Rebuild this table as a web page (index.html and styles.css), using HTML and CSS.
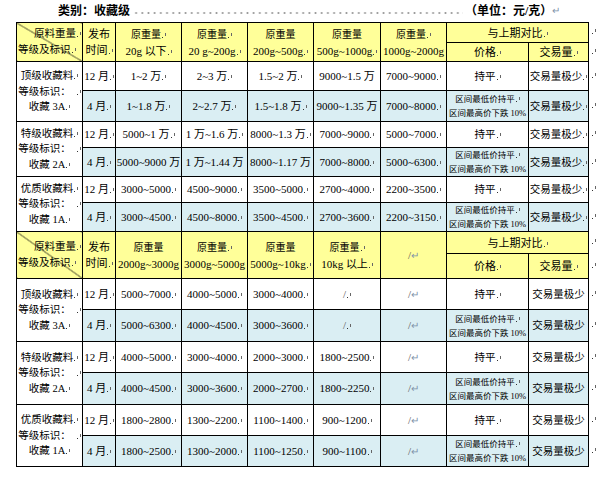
FILE: index.html
```html
<!DOCTYPE html>
<html lang="zh-CN">
<head>
<meta charset="utf-8">
<title>收藏级</title>
<link rel="stylesheet" href="styles.css">
</head>
<body>
<div class="title"><span class="t1">类别：收藏级</span><span class="dots"></span><span class="t2">（单位：元/克）</span><span class="ret">↵</span></div>
<table class="grid">
<colgroup>
<col class="c66"><col class="c33"><col class="c66"><col class="c66"><col class="c66"><col class="c67"><col class="c66"><col class="c82"><col class="c60"><col class="c12">
</colgroup>
<tbody>
<tr class="h20">
<td rowspan="2" class="hd diag"><div class="dl1">原料重量<i class="m"></i></div><div class="dl2">等级及标识<i class="m"></i></div></td>
<td rowspan="2" class="hd">发布<br>时间<i class="m"></i></td>
<td rowspan="2" class="hd"><span class="s">原重量</span><i class="m"></i><br>20g 以下<i class="m"></i></td>
<td rowspan="2" class="hd"><span class="s">原重量</span><i class="m"></i><br>20 g~200g<i class="m"></i></td>
<td rowspan="2" class="hd"><span class="s">原重量</span><br>200g~500g<i class="m"></i></td>
<td rowspan="2" class="hd"><span class="s">原重量</span><br>500g~1000g<i class="m"></i></td>
<td rowspan="2" class="hd"><span class="s">原重量</span><i class="m"></i><br>1000g~2000g</td>
<td colspan="2" class="hd">与上期对比<i class="m"></i></td>
<td class="rm"><i class="m"></i></td>
</tr>
<tr class="h18">
<td class="hd s">价格<i class="m"></i></td>
<td class="hd s">交易量<i class="m"></i></td>
<td class="rm"><i class="m"></i></td>
</tr>

<tr class="h29">
<td rowspan="2" class="g">顶级收藏料<i class="m"></i><br>等级标识：<i class="m sp"></i><br>收藏 3A<i class="m"></i></td>
<td>12 月<i class="m"></i></td>
<td>1~2 万<i class="m"></i></td>
<td>2~3 万<i class="m"></i></td>
<td>1.5~2 万<i class="m"></i></td>
<td>9000~1.5 万</td>
<td>7000~9000<i class="m"></i></td>
<td class="k">持平<i class="m"></i></td>
<td class="k">交易量极少<i class="m"></i></td>
<td class="rm"><i class="m"></i></td>
</tr>
<tr class="h31 b">
<td>4 月<i class="m"></i></td>
<td>1~1.8 万<i class="m"></i></td>
<td>2~2.7 万<i class="m"></i></td>
<td>1.5~1.8 万<i class="m"></i></td>
<td>9000~1.35 万</td>
<td>7000~8000<i class="m"></i></td>
<td class="sm">区间最低价持平<i class="m"></i><br>区间最高价下跌 10%</td>
<td class="k">交易量极少<i class="m"></i></td>
<td class="rm"><i class="m"></i></td>
</tr>

<tr class="h26">
<td rowspan="2" class="g">特级收藏料<i class="m"></i><br>等级标识：<i class="m sp"></i><br>收藏 2A<i class="m"></i></td>
<td>12 月<i class="m"></i></td>
<td>5000~1 万<i class="m"></i></td>
<td>1 万~1.6 万<i class="m"></i></td>
<td>8000~1.3 万<i class="m"></i></td>
<td>7000~9000<i class="m"></i></td>
<td>5000~7000<i class="m"></i></td>
<td class="k">持平<i class="m"></i></td>
<td class="k">交易量极少<i class="m"></i></td>
<td class="rm"><i class="m"></i></td>
</tr>
<tr class="h28 b">
<td>4 月<i class="m"></i></td>
<td>5000~9000 万</td>
<td>1 万~1.44 万</td>
<td>8000~1.17 万</td>
<td>7000~8000<i class="m"></i></td>
<td>5000~6300<i class="m"></i></td>
<td class="sm">区间最低价持平<i class="m"></i><br>区间最高价下跌 10%</td>
<td class="k">交易量极少<i class="m"></i></td>
<td class="rm"><i class="m"></i></td>
</tr>

<tr class="h26">
<td rowspan="2" class="g">优质收藏料<i class="m"></i><br>等级标识：<i class="m sp"></i><br>收藏 1A<i class="m"></i></td>
<td>12 月<i class="m"></i></td>
<td>3000~5000<i class="m"></i></td>
<td>4500~9000<i class="m"></i></td>
<td>3500~5000<i class="m"></i></td>
<td>2700~4000<i class="m"></i></td>
<td>2200~3500<i class="m"></i></td>
<td class="k">持平<i class="m"></i></td>
<td class="k">交易量极少<i class="m"></i></td>
<td class="rm"><i class="m"></i></td>
</tr>
<tr class="h28 b">
<td>4 月<i class="m"></i></td>
<td>3000~4500<i class="m"></i></td>
<td>4500~8000<i class="m"></i></td>
<td>3500~4500<i class="m"></i></td>
<td>2700~3600<i class="m"></i></td>
<td>2200~3150<i class="m"></i></td>
<td class="sm">区间最低价持平<i class="m"></i><br>区间最高价下跌 10%</td>
<td class="k">交易量极少<i class="m"></i></td>
<td class="rm"><i class="m"></i></td>
</tr>

<tr class="h22">
<td rowspan="2" class="hd diag"><div class="dl1">原料重量<i class="m"></i></div><div class="dl2">等级及标识<i class="m"></i></div></td>
<td rowspan="2" class="hd">发布<br>时间<i class="m"></i></td>
<td rowspan="2" class="hd"><span class="s">原重量</span><br>2000g~3000g</td>
<td rowspan="2" class="hd"><span class="s">原重量</span><i class="m"></i><br>3000g~5000g</td>
<td rowspan="2" class="hd"><span class="s">原重量</span><br>5000g~10kg<i class="m"></i></td>
<td rowspan="2" class="hd"><span class="s">原重量</span><i class="m"></i><br>10kg 以上<i class="m"></i></td>
<td rowspan="2" class="hd gr">/<span class="ret">↵</span></td>
<td colspan="2" class="hd">与上期对比<i class="m"></i></td>
<td class="rm"><i class="m"></i></td>
</tr>
<tr class="h25">
<td class="hd s">价格<i class="m"></i></td>
<td class="hd s">交易量<i class="m"></i></td>
<td class="rm"><i class="m"></i></td>
</tr>

<tr class="h31">
<td rowspan="2" class="g">顶级收藏料<i class="m"></i><br>等级标识：<i class="m sp"></i><br>收藏 3A<i class="m"></i></td>
<td>12 月<i class="m"></i></td>
<td>5000~7000<i class="m"></i></td>
<td>4000~5000<i class="m"></i></td>
<td>3000~4000<i class="m"></i></td>
<td class="gr">/<i class="m"></i></td>
<td class="gr">/<span class="ret">↵</span></td>
<td class="k">持平<i class="m"></i></td>
<td class="k">交易量极少</td>
<td class="rm"><i class="m"></i></td>
</tr>
<tr class="h32 b">
<td>4 月<i class="m"></i></td>
<td>5000~6300<i class="m"></i></td>
<td>4000~4500<i class="m"></i></td>
<td>3000~3600<i class="m"></i></td>
<td class="gr">/<i class="m"></i></td>
<td class="gr">/<span class="ret">↵</span></td>
<td class="sm">区间最低价持平<i class="m"></i><br>区间最高价下跌 10%</td>
<td class="k">交易量极少</td>
<td class="rm"><i class="m"></i></td>
</tr>

<tr class="h31">
<td rowspan="2" class="g">特级收藏料<i class="m"></i><br>等级标识：<i class="m sp"></i><br>收藏 2A<i class="m"></i></td>
<td>12 月<i class="m"></i></td>
<td>4000~5000<i class="m"></i></td>
<td>3000~4000<i class="m"></i></td>
<td>2000~3000<i class="m"></i></td>
<td>1800~2500<i class="m"></i></td>
<td class="gr">/<span class="ret">↵</span></td>
<td class="k">持平<i class="m"></i></td>
<td class="k">交易量极少</td>
<td class="rm"><i class="m"></i></td>
</tr>
<tr class="h32 b">
<td>4 月<i class="m"></i></td>
<td>4000~4500<i class="m"></i></td>
<td>3000~3600<i class="m"></i></td>
<td>2000~2700<i class="m"></i></td>
<td>1800~2250<i class="m"></i></td>
<td class="gr">/<span class="ret">↵</span></td>
<td class="sm">区间最低价持平<i class="m"></i><br>区间最高价下跌 10%</td>
<td class="k">交易量极少</td>
<td class="rm"><i class="m"></i></td>
</tr>

<tr class="h31">
<td rowspan="2" class="g">优质收藏料<i class="m"></i><br>等级标识：<i class="m sp"></i><br>收藏 1A<i class="m"></i></td>
<td>12 月<i class="m"></i></td>
<td>1800~2800<i class="m"></i></td>
<td>1300~2200<i class="m"></i></td>
<td>1100~1400<i class="m"></i></td>
<td>900~1200<i class="m"></i></td>
<td class="gr">/<span class="ret">↵</span></td>
<td class="k">持平<i class="m"></i></td>
<td class="k">交易量极少</td>
<td class="rm"><i class="m"></i></td>
</tr>
<tr class="h31 b">
<td>4 月<i class="m"></i></td>
<td>1800~2500<i class="m"></i></td>
<td>1300~2000<i class="m"></i></td>
<td>1100~1250<i class="m"></i></td>
<td>900~1100<i class="m"></i></td>
<td class="gr">/<span class="ret">↵</span></td>
<td class="sm">区间最低价持平<i class="m"></i><br>区间最高价下跌 10%</td>
<td class="k">交易量极少</td>
<td class="rm"><i class="m"></i></td>
</tr>
</tbody>
</table>
</body>
</html>
```

FILE: styles.css
```css
body {
  margin: 0;
  background: #ffffff;
  color: #000000;
  font-family: "Liberation Serif", "Noto Sans CJK SC", serif;
}

.title {
  display: flex;
  align-items: center;
  height: 22px;
  padding-left: 58px;
  font-family: "Liberation Serif", "Noto Sans CJK SC", serif;
  font-weight: bold;
  font-size: 12px;
  line-height: 22px;
}

.dots {
  width: 330px;
  height: 2px;
  margin: 3px 2px 0 3px;
  background: radial-gradient(circle, #9a9a9a 0.9px, transparent 1.1px) 0 0 / 6.2px 2px repeat-x;
}

.ret {
  color: #8094aa;
  font-weight: normal;
  font-size: 10px;
}

.grid {
  border-collapse: collapse;
  table-layout: fixed;
  margin-left: 16px;
  width: 584px;
}

.c66 { width: 66px; }
.c33 { width: 33px; }
.c67 { width: 67px; }
.c82 { width: 82px; }
.c60 { width: 60px; }
.c12 { width: 12px; }

.grid td {
  border: 1px solid #000000;
  padding: 0;
  text-align: center;
  vertical-align: middle;
  font-size: 11px;
  line-height: 15px;
  white-space: nowrap;
  overflow: visible;
}

.h20 { height: 20px; }
.h18 { height: 18px; }
.h22 { height: 22px; }
.h25 { height: 25px; }
.h26 { height: 26px; }
.h28 { height: 28px; }
.h29 { height: 29px; }
.h31 { height: 31px; }
.h32 { height: 32px; }

.grid td.hd {
  background: #ffff99;
  line-height: 16px;
}

.s {
  font-size: 10px;
}

.grid td.k {
  font-size: 10.5px;
}

.b td {
  background: #daeef3;
}

.grid td.rm {
  border: none;
  background: none;
  text-align: left;
  vertical-align: middle;
  padding-left: 2px;
  padding-bottom: 4px;
}

.grid td.g {
  background: #ffffff;
  line-height: 15.5px;
  font-size: 10.5px;
}

.grid td.sm {
  font-size: 8.5px;
  line-height: 14px;
}

.grid td.gr {
  color: #555555;
}

.grid td.diag {
  background:
    linear-gradient(to top right, transparent calc(50% - 0.6px), #000000 50%, transparent calc(50% + 0.6px)),
    #ffff99;
  font-size: 10.5px;
  line-height: 16px;
}

.dl1 {
  text-align: right;
  padding-right: 1px;
}

.dl2 {
  text-align: left;
  padding-left: 1px;
}

.m {
  display: inline-block;
  width: 4px;
  height: 5px;
  margin-left: 1px;
  background:
    linear-gradient(#333333, #333333) 0 100% / 1px 1px no-repeat,
    linear-gradient(#666666, #666666) 100% 0 / 1px 3px no-repeat;
}

.m.sp {
  margin-left: 6px;
}
```
